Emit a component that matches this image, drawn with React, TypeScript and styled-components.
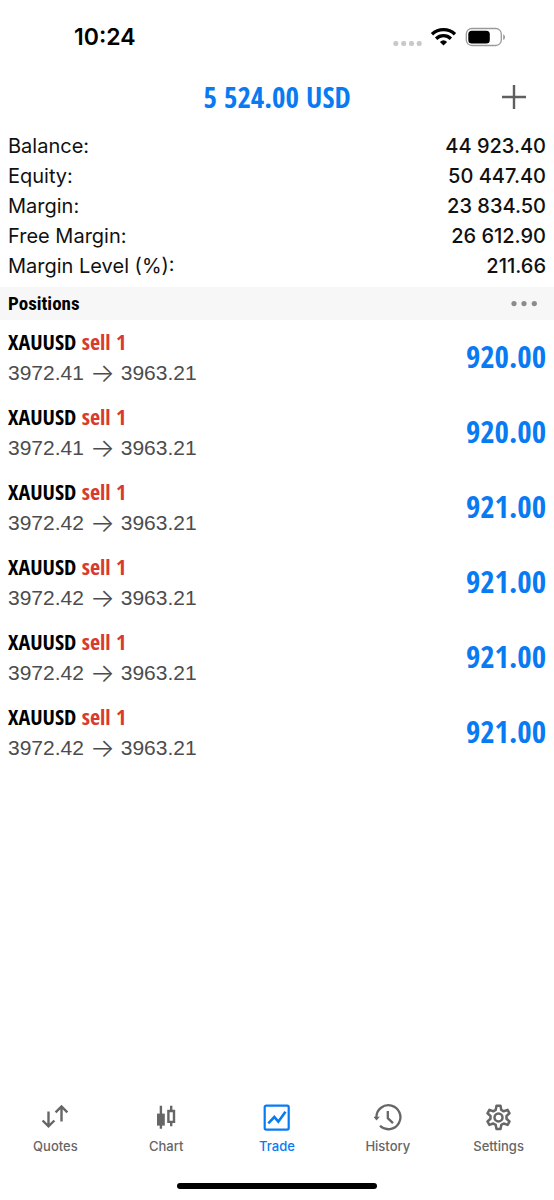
import React from "react";
import styled, { createGlobalStyle } from "styled-components";

const BLUE = "#087bf3";
const GREY = "#666666";
const SANS = `Inter, "Liberation Sans", sans-serif`;
const NARROW = `"Open Sans Condensed", "Roboto Condensed", sans-serif`;

const GlobalStyle = createGlobalStyle`
  * { box-sizing: border-box; }
  body { margin: 0; background: #fff; color: #111; font-family: ${SANS}; }
  button { border: 0; padding: 0; background: none; font: inherit; color: inherit; cursor: pointer; }
  svg { display: block; }
`;

const Screen = styled.div`
  min-height: 100vh;
  display: flex;
  flex-direction: column;
`;

const StatusBar = styled.div`
  display: flex;
  align-items: center;
  justify-content: space-between;
  height: 74px;
  padding: 0 48px 0 74px;
`;

const Clock = styled.time`
  font-size: 23px;
  line-height: 28px;
  font-weight: 600;
  color: #000;
`;

const Header = styled.header`
  display: grid;
  grid-template-columns: 1fr auto 1fr;
  align-items: center;
  height: 46px;
  padding: 0 28px;
`;

const Profit = styled.h1`
  grid-column: 2;
  margin: 0;
  font-family: ${NARROW};
  font-size: 29px;
  line-height: 34px;
  font-weight: 600;
  color: ${BLUE};
`;

const AddButton = styled.button`
  justify-self: end;
`;

const Account = styled.dl`
  margin: 0;
  padding: 11px 8px 6px;
`;

const AccountRow = styled.div`
  display: flex;
  justify-content: space-between;
  font-size: 20px;
  line-height: 30px;
`;

const AccountLabel = styled.dt`
  font-weight: 400;
`;

const AccountValue = styled.dd`
  margin: 0;
  font-weight: 500;
`;

const SectionBar = styled.div`
  display: flex;
  align-items: center;
  justify-content: space-between;
  height: 33px;
  padding: 0 16px 0 8px;
  background: #f7f7f7;
`;

const SectionTitle = styled.h2`
  margin: 0;
  font-family: "Roboto Condensed", sans-serif;
  font-size: 19px;
  line-height: 24px;
  font-weight: 700;
  color: #000;
`;

const PositionList = styled.ul`
  flex: 1;
  margin: 0;
  padding: 0;
  list-style: none;
`;

const PositionRow = styled.li`
  display: flex;
  align-items: center;
  justify-content: space-between;
  height: 75px;
  padding: 0 8px 4px;
`;

const Details = styled.div`
  display: flex;
  flex-direction: column;
  gap: 2px;
  padding-top: 2px;
`;

const Instrument = styled.div`
  font-family: ${NARROW};
  font-size: 22px;
  line-height: 30px;
  font-weight: 600;
  color: #000;
`;

const Side = styled.span`
  color: #d93a2f;
`;

const Prices = styled.div`
  display: flex;
  align-items: center;
  gap: 6px;
  font-family: "Liberation Sans", Arial, sans-serif;
  font-size: 21px;
  line-height: 30px;
  color: #4c4c4e;
`;

const Arrow = styled.span`
  font-family: ${SANS};
  font-size: 26px;
  font-weight: 300;
`;

const Gain = styled.div`
  font-family: ${NARROW};
  font-size: 31px;
  line-height: 36px;
  font-weight: 600;
  color: ${BLUE};
`;

const TabBar = styled.nav`
  display: grid;
  grid-template-columns: repeat(5, 1fr);
  height: 80px;
`;

const Tab = styled.button<{ $active?: boolean }>`
  display: flex;
  flex-direction: column;
  align-items: center;
  gap: 6px;
  color: ${(p) => (p.$active ? BLUE : GREY)};
  font-size: 13px;
  line-height: 18px;
  font-weight: 500;
`;

const HomeIndicator = styled.div`
  width: 36%;
  height: 6px;
  margin: 0 auto 11px;
  border-radius: 3px;
  background: #000;
`;

const account = [
  ["Balance:", "44 923.40"],
  ["Equity:", "50 447.40"],
  ["Margin:", "23 834.50"],
  ["Free Margin:", "26 612.90"],
  ["Margin Level (%):", "211.66"],
];

const positions = [
  { open: "3972.41", gain: "920.00" },
  { open: "3972.41", gain: "920.00" },
  { open: "3972.42", gain: "921.00" },
  { open: "3972.42", gain: "921.00" },
  { open: "3972.42", gain: "921.00" },
  { open: "3972.42", gain: "921.00" },
];

const StatusGlyphs = () => (
  <svg width="114" height="22" viewBox="0 0 114 22" aria-hidden="true">
    <g fill="#c9c9c9">
      <rect x="1.300" y="15" width="5" height="5" rx="2" />
      <rect x="9.200" y="15" width="5" height="5" rx="2" />
      <rect x="17" y="15" width="5" height="5" rx="2" />
      <rect x="24.700" y="15" width="5" height="5" rx="2" />
    </g>
    <g fill="none" stroke="#000" strokeWidth="3.300">
      <path d="M40 8.200a16.600 16.600 0 0 1 23 0" />
      <path d="M44.100 12.700a10.600 10.600 0 0 1 14.800 0" />
    </g>
    <path d="M47.900 15.900a5.400 5.400 0 0 1 7.200 0L51.500 19.600Z" fill="#000" />
    <rect x="74.300" y="2.500" width="35" height="17" rx="5.500" fill="none" stroke="#9a9a9a" strokeWidth="1.300" />
    <rect x="76.300" y="4.800" width="21.500" height="12.600" rx="3.500" fill="#000" />
    <path d="M111.200 8.200c2.400.8 2.400 5 0 5.800Z" fill="#9a9a9a" />
  </svg>
);

const QuotesIcon = () => (
  <svg width="28" height="28" viewBox="0 0 28 28" fill="none" stroke="currentColor" strokeWidth="2.400">
    <path d="M7.500 8.500v15M1.600 17.500l5.900 5.900 5.900-5.900" />
    <path d="M20.500 18.500V3.500M14.600 9.400l5.900-5.900 5.900 5.900" />
  </svg>
);

const ChartIcon = () => (
  <svg width="28" height="28" viewBox="0 0 28 28" fill="none" stroke="currentColor" strokeWidth="2.400">
    <path d="M8.900 2.800v23M19.200 2.800v4.600M19.200 18.600v4.600" />
    <path d="M5 10.600h7.800v12H5z" fill="currentColor" stroke="none" />
    <path d="M16.400 8h5.600v10.900h-5.600z" />
  </svg>
);

const TradeIcon = () => (
  <svg width="28" height="28" viewBox="0 0 28 28" fill="none" stroke="currentColor" strokeWidth="2.200">
    <rect x="1.700" y="2.600" width="24" height="24" rx="1.500" />
    <path d="M5.300 20.300l6-6.300 4 4.700 7.200-10" strokeWidth="2.600" />
  </svg>
);

const HistoryIcon = () => (
  <svg width="28" height="28" viewBox="0 0 28 28" fill="none" stroke="currentColor" strokeWidth="2.300">
    <path d="M2.400 14.300A12 12 0 1 1 6 22.800" />
    <path d="M-.8 13.700h6.600L2.500 17.400z" fill="currentColor" stroke="none" />
    <path d="M13.800 8v7.200l5.200 4.900" />
  </svg>
);

const SettingsIcon = () => (
  <svg width="28" height="28" viewBox="0 0 28 28" fill="none" stroke="currentColor" strokeWidth="2.500" strokeLinejoin="round">
    <path d="M11.500 2.700h4l.8 4.200 2.400 1.400 3.900-1.400 1.900 3.400-3 2.700v2.800l3 2.700-1.900 3.400-3.900-1.400-2.400 1.400-.8 4.200h-4l-.8-4.200-2.400-1.400-3.900 1.400-1.900-3.400 3-2.700V13l-3-2.700 1.900-3.400 3.900 1.400 2.400-1.400z" />
    <circle cx="13.500" cy="14.400" r="4" />
  </svg>
);

const tabs = [
  { label: "Quotes", Icon: QuotesIcon },
  { label: "Chart", Icon: ChartIcon },
  { label: "Trade", Icon: TradeIcon, active: true },
  { label: "History", Icon: HistoryIcon },
  { label: "Settings", Icon: SettingsIcon },
];

export default function App() {
  return (
    <Screen>
      <GlobalStyle />
      <StatusBar>
        <Clock>10:24</Clock>
        <StatusGlyphs />
      </StatusBar>
      <Header>
        <Profit>5 524.00 USD</Profit>
        <AddButton aria-label="New order">
          <svg width="24" height="24" viewBox="0 0 24 24" stroke="#5f5f5f" strokeWidth="2.400">
            <path d="M0 12h24M12 0v24" />
          </svg>
        </AddButton>
      </Header>
      <Account>
        {account.map(([label, value]) => (
          <AccountRow key={label}>
            <AccountLabel>{label}</AccountLabel>
            <AccountValue>{value}</AccountValue>
          </AccountRow>
        ))}
      </Account>
      <SectionBar>
        <SectionTitle>Positions</SectionTitle>
        <button aria-label="Position options">
          <svg width="28" height="20" viewBox="0 0 28 20" fill="#8c8c8c">
            <circle cx="4" cy="9.600" r="2.600" />
            <circle cx="14" cy="9.600" r="2.600" />
            <circle cx="24.300" cy="9.600" r="2.600" />
          </svg>
        </button>
      </SectionBar>
      <PositionList>
        {positions.map((p, i) => (
          <PositionRow key={i}>
            <Details>
              <Instrument>
                XAUUSD <Side>sell 1</Side>
              </Instrument>
              <Prices>
                {p.open} <Arrow>→</Arrow> 3963.21
              </Prices>
            </Details>
            <Gain>{p.gain}</Gain>
          </PositionRow>
        ))}
      </PositionList>
      <TabBar>
        {tabs.map(({ label, Icon, active }) => (
          <Tab key={label} $active={active} aria-current={active ? "page" : undefined}>
            <Icon />
            {label}
          </Tab>
        ))}
      </TabBar>
      <HomeIndicator />
    </Screen>
  );
}
